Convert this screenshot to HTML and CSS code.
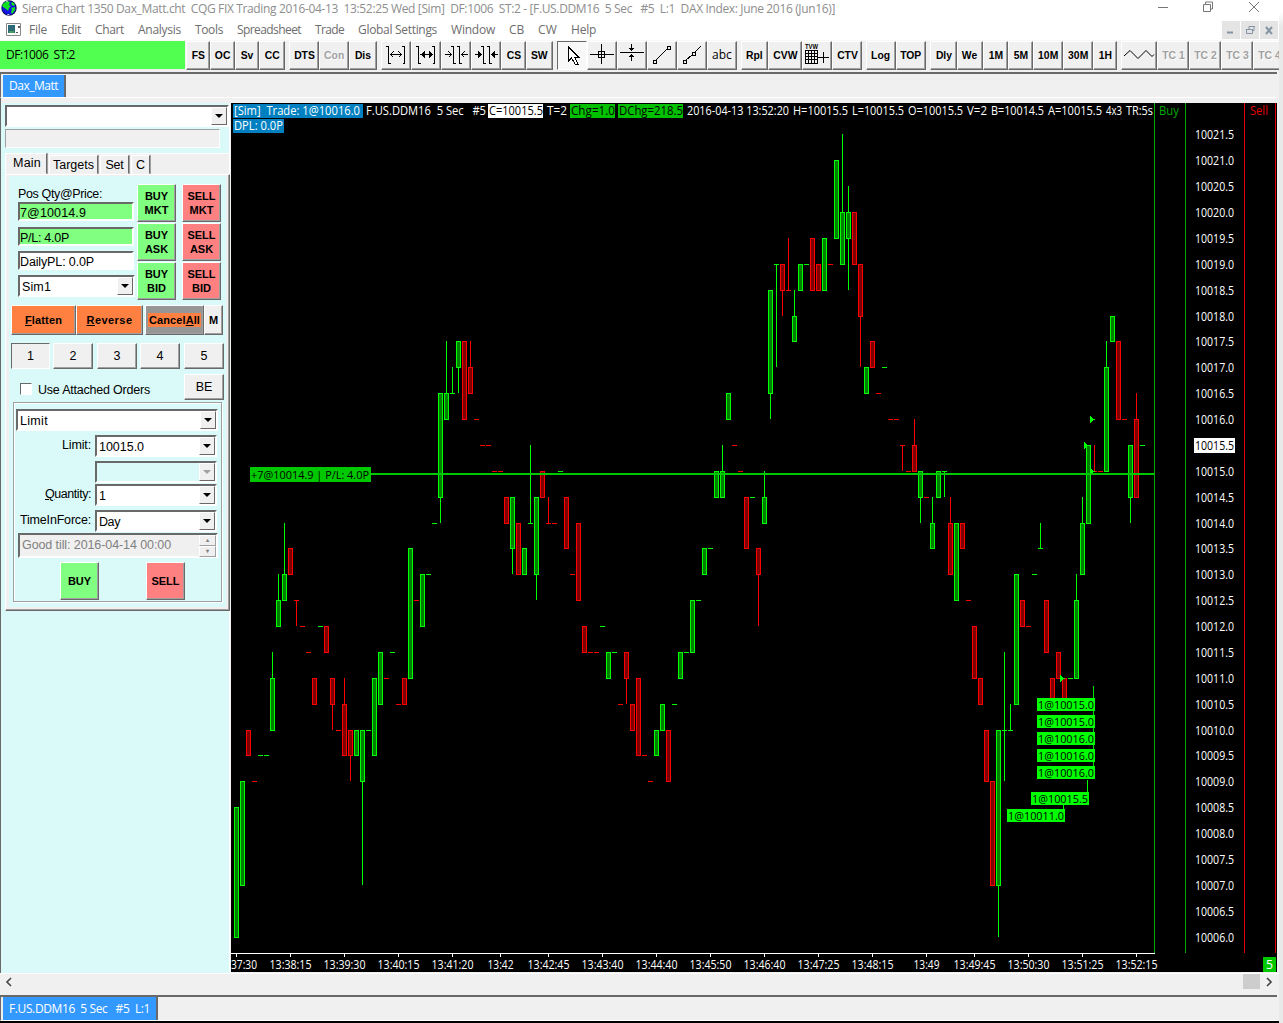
FILE: index.html
```html
<!DOCTYPE html>
<html lang="en">
<head>
<meta charset="utf-8">
<title>Sierra Chart</title>
<link rel="stylesheet" href="styles.css">
</head>
<body>
<div class="window">
  <header class="titlebar">
    <svg class="globe" width="16" height="16" viewBox="0 0 16 16"><circle cx="8" cy="8" r="7.7" fill="#0a0a50"/><circle cx="8" cy="8" r="6.8" fill="#1414e0"/><path d="M3 3l3-2 3 1-1 3 2 1-2 2-1 3-2-2-3-2-1-2zM11 2l2 1 1 2-2 1-2-2zM10 8l4-1v3l-3 4-1-2 1-2z" fill="#10e020"/><path d="M5 1l2 0-1 1zM6 14l3 0-2 1z" fill="#fff"/></svg>
    <div class="title"><span data-w="813">Sierra Chart 1350 Dax_Matt.cht&nbsp; CQG FIX Trading 2016-04-13&nbsp; 13:52:25 Wed [Sim]&nbsp; DF:1006&nbsp; ST:2 - [F.US.DDM16&nbsp; 5 Sec&nbsp;&nbsp; #5&nbsp; L:1&nbsp; DAX Index: June 2016 (Jun16)]</span></div>
    <svg class="syscontrols" width="110" height="20" viewBox="0 0 110 20" fill="none" stroke="#777"><path d="M5 7.500h10M50.500 4.500h7v7h-7zM52.500 4v-2h7v7h-2M96 2l10 10M106 2L96 12"/></svg>
  </header>
  <nav class="menubar">
    <svg class="docicon" width="16" height="14" viewBox="0 0 16 14"><path d="M.5.500h14v12H.5z" fill="#fff" stroke="#888"/><path d="M2 2h7v8H2z" fill="#2d6a78"/><path d="M3 8h5v2H3z" fill="#4a9a58"/><path d="M10 9h2v1h-2zM12 3h2v2h-2z" fill="#555"/></svg>
    <span data-w="18">File</span><span data-w="20">Edit</span><span data-w="29">Chart</span><span data-w="43">Analysis</span><span data-w="28">Tools</span><span data-w="64">Spreadsheet</span><span data-w="29">Trade</span><span data-w="79">Global Settings</span><span data-w="44">Window</span><span data-w="15">CB</span><span data-w="19">CW</span><span data-w="25">Help</span>
    <svg class="mdi" width="57" height="18" viewBox="0 0 57 18"><path d="M0 0h18v18H0zM19 0h18v18H19zM38 0h18v18H38z" fill="#e4e4e4"/><path d="M5 11.500h6" stroke="#8494a4" stroke-width="2"/><path d="M24.500 8.500h6v4h-6zM27 8V5.500h5v4h-1M24 8.500h7M27 5.500h6" fill="none" stroke="#8494a4"/><path d="M44 6l6 7M50 6l-6 7" stroke="#8494a4" stroke-width="2"/></svg>
  </nav>
  <div class="toolbar" id="toolbar"><div class="status"><span data-w="69">DF:1006&nbsp; ST:2</span></div></div>
  <div class="tabstrip"><div class="tab"><span data-w="49">Dax_Matt</span></div></div>
  <main class="work">
    <aside class="trade">
      <div class="combo symbol"><i></i><b class="drop"></b></div>
      <div class="readout"></div>
      <div class="pages"><span class="page on"><em data-w="28">Main</em></span><span class="page p2"><em data-w="41">Targets</em></span><span class="page p3"><em data-w="18">Set</em></span><span class="page p4"><em>C</em></span></div>
      <section class="sheet"><div class="inner">
        <div class="top">
          <div class="fields">
            <label><span data-w="84">Pos Qty@Price:</span></label>
            <div class="field green f1"><span data-w="66">7@10014.9</span></div>
            <div class="field green f2"><span data-w="49">P/L: 4.0P</span></div>
            <div class="field f3"><span data-w="74">DailyPL: 0.0P</span></div>
            <div class="combo acct"><i><span data-w="29">Sim1</span></i><b class="drop"></b></div>
          </div>
          <div class="stack"><button class="buy">BUY<br>MKT</button><button class="buy">BUY<br>ASK</button><button class="buy">BUY<br>BID</button></div>
          <div class="stack"><button class="sell">SELL<br>MKT</button><button class="sell">SELL<br>ASK</button><button class="sell">SELL<br>BID</button></div>
        </div>
        <div class="actions"><button class="orange a1"><span data-w="37"><u>F</u>latten</span></button><button class="orange a2"><span data-w="46"><u>R</u>everse</span></button><button class="cancel"><span class="hl"><span data-w="51">Cancel<u>A</u>ll</span></span></button><button class="m">M</button></div>
        <div class="nums"><button class="down">1</button><button>2</button><button>3</button><button>4</button><button>5</button></div>
        <div class="attach"><span class="check"></span><span class="cap"><span data-w="112">Use Attached Orders</span></span><button>BE</button></div>
        <div class="group">
          <div class="combo type"><i><span data-w="28">Limit</span></i><b class="drop"></b></div>
          <div class="row r1"><span data-w="29">Limit:</span><div class="combo"><i><span data-w="45">10015.0</span></i><b class="drop"></b></div></div>
          <div class="row r2"><div class="combo off"><i></i><b class="drop"></b></div></div>
          <div class="row r3"><span data-w="46"><u>Q</u>uantity:</span><div class="combo"><i>1</i><b class="drop"></b></div></div>
          <div class="row r4"><span data-w="71">TimeInForce:</span><div class="combo"><i><span data-w="21">Day</span></i><b class="drop"></b></div></div>
          <div class="till"><span data-w="149">Good till: 2016-04-14 00:00</span><div class="spin"><b>&#9652;</b><b>&#9662;</b></div></div>
          <div class="send"><button class="buy">BUY</button><button class="sell">SELL</button></div>
        </div>
      </div></section>
    </aside>
    <svg id="chart" width="1046" height="869" viewBox="231 103 1046 869" shape-rendering="crispEdges"></svg>
  </main>
  <div class="hscroll"><svg width="10" height="10" viewBox="0 0 10 10"><path d="M7 1L3 5l4 4" fill="none" stroke="#444" stroke-width="1.600"/></svg><span class="thumb"></span><svg width="10" height="10" viewBox="0 0 10 10"><path d="M3 1l4 4-4 4" fill="none" stroke="#444" stroke-width="1.600"/></svg></div>
  <footer class="tabstrip bottom"><div class="tab"><span data-w="141">F.US.DDM16&nbsp; 5 Sec&nbsp;&nbsp; #5&nbsp; L:1</span></div></footer>
</div>
<div class="edge"></div>
<script src="app.js"></script>
</body>
</html>
```
FILE: styles.css
```css
* { box-sizing: border-box; }
body { margin: 0; width: 1283px; height: 1023px; overflow: hidden; display: flex; background: #000; font: 12px "Open Sans", sans-serif; color: #000; }
.window { width: 1279px; height: 1021px; background: #f0f0f0; display: flex; flex-direction: column; flex: none; }
.edge { width: 4px; height: 1023px; background: linear-gradient(#fff 0, #fff 12px, #e8eaea 26px); }
[data-w] { white-space: nowrap; display: inline-block; }
em { font-style: normal; }

.titlebar { height: 20px; background: #fff; display: flex; flex: none; color: #8e8e8e; }
.globe { margin: 0 5px 0 1px; flex: none; }
.title { line-height: 17px; width: 814px; flex: none; }
.syscontrols { margin-left: 317px; flex: none; }
.menubar { height: 20px; background: #fff; display: flex; gap: 14px; flex: none; color: #6d6d6d; line-height: 19px; }
.docicon { margin: 3px -7px 0 6px; flex: none; }
.mdi { margin: 1px 0 0 auto; flex: none; }

.toolbar { height: 32px; display: flex; flex: none; overflow: hidden; border-top: 1px solid #f8f8f8; }
.status { width: 185px; height: 28px; background: #50ff50; padding-left: 6px; line-height: 27px; flex: none; margin-right: 1px; }
.tool { height: 29px; flex: none; border: 1px solid; border-color: #fff #696969 #696969 #fff; box-shadow: inset -1px -1px #a0a0a0; font: bold 11.5px/27px "Liberation Sans", sans-serif; text-align: center; white-space: nowrap; overflow: hidden; }
.tool b { display: inline-block; transform: scaleX(.9); margin: 0 -6px; }
.tool svg { display: block; margin: -2px 0 0 -1px; }
.tool.gap { margin-left: 4px; }
.tool.dim { color: #a0a0a0; text-shadow: 1px 1px #fff; }
.tool.press { background: #f8f8f8; border-color: #696969 #fff #fff #696969; box-shadow: none; }
.tool.word { font: 12px/26px "Open Sans", sans-serif; }

.tabstrip { height: 26px; border-top: 2px solid #696969; border-left: 1px solid #696969; border-bottom: 1px solid #fff; padding-left: 2px; display: flex; flex: none; width: 1277px; }
.tab { background: #3399ff; color: #fff; width: 63px; height: 22px; border-right: 2px solid #696969; text-align: center; line-height: 21px; margin-top: 1px; }
.work { height: 875px; display: flex; flex: none; padding-top: 5px; border-left: 1px solid #696969; }
.trade { width: 229px; height: 870px; background: #dafafa; border-right: 1px solid #fff; border-left: 1px solid #dafafa; padding: 2px 0 0 3px; font: 12.5px "Liberation Sans", sans-serif; flex: none; }
#chart { display: block; background: #000; flex: none; margin-left: 1px; }

.combo { display: flex; border: 2px solid; border-color: #696969 #fff #fff #696969; background: #fff; height: 22px; width: 117px; align-items: stretch; }
.combo i { flex: 1; font-style: normal; padding-left: 2px; line-height: 20px; }
.drop { width: 16px; background: #f0f0f0; border: 1px solid; border-color: #fff #696969 #696969 #fff; display: flex; align-items: center; justify-content: center; }
.drop::after { content: ""; border: 4px solid transparent; border-top-color: #000; border-bottom: 0; }
.combo.off, .combo.off i { background: #dafafa; }
.off .drop::after { border-top-color: #a0a0a0; }
.symbol { width: 224px; }
.readout { width: 215px; height: 19px; margin-top: 2px; border: 1px solid; border-color: #a0a0a0 #fff #fff #a0a0a0; background: #f0f0f0; }
.pages { display: flex; height: 21px; margin-top: 5px; background: #f0f0f0; align-items: flex-end; gap: 2px; width: 224px; border-top: 1px solid #fff; }
.page { height: 19px; border: 1px solid; border-color: #fff #696969 transparent #fff; box-shadow: 1px 0 #a0a0a0; text-align: center; line-height: 19px; }
.page.on { width: 42px; height: 21px; line-height: 18px; padding-left: 2px; }
.p2 { width: 49px; } .p3 { width: 29px; } .p4 { width: 19px; }
.sheet { width: 225px; height: 437px; background: #f0f0f0; border: 1px solid #fff; border-color: #fff #696969 #696969 #fff; box-shadow: inset -1px -1px #a0a0a0; padding: 1px 3px 3px 3px; }
.inner { background: #dafafa; height: 431px; width: 217px; }
.top { display: flex; height: 124px; padding: 8px 0 0 9px; }
.fields { width: 116px; margin-right: 3px; }
.fields label { display: block; height: 18px; line-height: 20px; }
.field { height: 19px; border: 2px solid; border-color: #696969 #fff #fff #696969; background: #fff; line-height: 18px; }
.field.green { background: #80ff80; }
.f2 { margin-top: 6px; } .f3 { margin-top: 5px; } .acct { margin-top: 5px; }
.acct i { line-height: 21px; }
.stack { display: flex; flex-direction: column; gap: 1px; width: 39px; margin-right: 6px; }
button { padding: 0; border: 1px solid; border-color: #fff #696969 #696969 #fff; box-shadow: inset -1px -1px #a0a0a0; background: #f0f0f0; color: #000; font: 12.5px "Liberation Sans", sans-serif; border-radius: 0; }
button.buy, button.sell { font: bold 11px/14px "Liberation Sans", sans-serif; width: 39px; height: 38px; }
button.buy { background: #80ff80; } button.sell { background: #ff8080; }
.actions { display: flex; margin: 5px 0 0 2px; height: 30px; }
.actions button { font-weight: bold; font-size: 11px; }
button.orange { background: #ff8040; width: 67px; }
button.orange.a1 { width: 65px; }
button.cancel { background: #969696; width: 59px; margin-left: 2px; display: flex; align-items: center; justify-content: center; }
.hl { background: #ff8040; padding: 1px; width: 53px; }
button.m { width: 19px; }
.nums { display: flex; gap: 3px; margin: 8px 1px 0 2px; height: 26px; width: 213px; }
.nums button { width: 40px; }
.nums button:nth-child(odd):not(:first-child) { margin-left: 1px; }
.nums button.down { width: 39px; border-color: #696969 #fff #fff #696969; box-shadow: none; }
.attach { display: flex; height: 26px; margin: 5px 0 0 11px; }
.check { width: 12px; height: 12px; border: 1px solid; border-color: #696969 #fff #fff #696969; background: #fff; margin-top: 9px; }
.cap { margin: 8px 0 0 6px; width: 146px; line-height: 16px; }
.attach button { width: 40px; }
.group { margin: 2px 0 0 4px; width: 209px; height: 200px; border: 1px solid #a0a0a0; box-shadow: inset 1px 1px #fff, 1px 1px #fff; padding: 6px 0 0 2px; }
.type { width: 202px; }
.row { display: flex; justify-content: flex-end; width: 202px; height: 22px; gap: 4px; }
.row > span { line-height: 21px; }
.row .combo { width: 122px; margin-right: 1px; }
.r1 { margin-top: 4px; } .r2 { margin-top: 4px; } .r3 { margin-top: 1px; } .r4 { margin-top: 4px; }
.till { width: 200px; height: 25px; margin: 1px 0 0 2px; border: 2px solid; border-color: #696969 #fff #fff #696969; background: #f0f0f0; color: #808080; display: flex; justify-content: space-between; line-height: 21px; padding-left: 2px; }
.spin { width: 17px; display: flex; flex-direction: column; }
.spin b { height: 11px; border: 1px solid; border-color: #fff #a0a0a0 #a0a0a0 #fff; font-size: 6px; line-height: 9px; text-align: center; }
.send { display: flex; gap: 47px; margin: 4px 0 0 44px; }

.hscroll { height: 22px; border-top: 1px solid #fff; display: flex; align-items: flex-start; flex: none; padding: 0 5px 0 4px; }
.hscroll svg { margin-top: 3px; }
.thumb { width: 17px; height: 15px; background: #cdcdcd; margin: 0 4px 0 auto; }
.bottom .tab { width: 155px; margin-top: 0; height: 23px; line-height: 23px; }
```
FILE: app.js
```js
// Toolbar: [label or icon name, width, classes]
const icons = {
  range: '<path d="M5 6.500h2.500v17M7.500 23.500h2M9 14.500h12M12.500 11.500l-3 3 3 3M17.500 11.500l3 3-3 3M21 6.500h2.500v17h-2"/>',
  rangeb: '<path d="M5 6.500h2.500v17M7.500 23.500h2M9 14.500h12M21 6.500h2.500v17h-2"/><path d="M13.500 10.500v8l-4-4zM17.500 10.500v8l4-4z" fill="#000" stroke="none"/>',
  squeeze: '<path d="M4 14.500h6M7.500 11.500l3 3-3 3M27 14.500h-6M23.500 11.500l-3 3 3 3M10 6.500h2.500v17h2M16 6.500h2.500v17h2"/>',
  squeezeb: '<path d="M4 14.500h6M27 14.500h-6M10 6.500h2.500v17h2M16 6.500h2.500v17h2"/><path d="M7 10.500v8l4-4zM24 10.500v8l-4-4z" fill="#000" stroke="none"/>',
  pointer: '<path d="M11.500 7v14l3-3 3.500 6h3l-3.500-7h4z" fill="#fff"/>',
  cross: '<path d="M3 14.500h24M14.500 4v20M11.500 11.500h6v6h-6z"/>',
  hline: '<path d="M3 12.500h24M14.500 4v6M12.500 8l2 2 2-2M14.500 21v-6M12.500 17l2-2 2 2"/>',
  line: '<path d="M9 20L20 9M6.500 20.500h3v3h-3zM20.500 6.500h3v3h-3z"/>',
  ray: '<path d="M9 20L15 15M18 12L24 6M6.500 20.500h3v3h-3zM15.500 12.500h3v3h-3z"/>',
  table: '<path d="M3.500 10.500h12v13h-12zM3 13.500h13M3 16.500h13M3 19.500h13M6.500 10v14M9.500 10v14M12.500 10v14" stroke-width="1.300"/><path d="M16 17.500h11M21.500 12v11"/>',
  zig: '<path d="M3 16L9 10.500 17 18.500 25 10.500 31 16.500 33 14.500" shape-rendering="auto"/>'
};
const tools = [["FS",24],["OC",25],["Sv",24],["CC",26],["DTS",30,"gap"],["Con",30,"dim"],["Dis",28],
  ["@range",30,"gap"],["@rangeb",30],["@squeeze",30],["@squeezeb",30],["CS",25],["SW",27],
  ["@pointer",30,"gap press"],["@cross",30],["@hline",30],["@line",30],["@ray",30],["abc",30,"word"],
  ["Rpl",27,"gap"],["CVW",34],["@table",30],["CTV",30],["Log",30,"gap"],["TOP",30],["Dly",27,"gap"],["We",26],["1M",25],["5M",25],["10M",30],["30M",30],["1H",24],
  ["@zig",36,"gap"],["TC 1",32,"dim"],["TC 2",32,"dim"],["TC 3",32,"dim"],["TC 4",32,"dim"]];
document.getElementById("toolbar").insertAdjacentHTML("beforeend", tools.map(([t, w, c = ""]) => {
  const name = t.slice(1);
  const body = t[0] === "@"
    ? `<svg width="${w}" height="28" viewBox="0 0 ${w} 28" fill="none" stroke="#000" shape-rendering="crispEdges">${icons[name]}${name === "table" ? '<text x="3" y="9" font-size="6.500" font-weight="bold" textLength="13" lengthAdjust="spacingAndGlyphs" fill="#000" stroke="none">TVW</text>' : ""}</svg>`
    : c === "word" ? t : `<b>${t}</b>`;
  return `<div class="tool ${c}" style="width:${w}px">${body}</div>`;
}).join(""));

// Tracks each caption to its nominal width
document.querySelectorAll("[data-w]").forEach(e => {
  const n = e.textContent.length, w = e.getBoundingClientRect().width;
  e.style.letterSpacing = ((e.dataset.w - w) / n) + "px";
});

// Bars: column, high, body top, body bottom, low (half-point steps below 10021.5), direction
const bars = `0 26 26 31 31 G,1 25 25 29 29 G,2 23 23 24 24 R,3 25 25 25 25 R,4 24 24 24 24 G,5 24 24 24 24 G,6 20 21 23 23 G,7 17 18 19 19 G,8 15 17 18 18 G,9 16 16 17 17 R,10 18 18 18 19 R,11 19 19 19 19 R,12 20 20 20 20 R,13 21 21 22 22 R,14 19 19 19 19 G,15 19 19 20 20 R,16 21 21 22 23 R,17 23 23 23 23 R,18 21 22 24 24 R,19 23 23 24 25 R,20 23 23 24 24 G,21 23 23 25 29 G,22 23 23 23 23 G,23 21 21 24 24 G,24 20 20 22 22 G,25 21 21 21 21 R,26 20 20 20 20 G,27 22 22 22 22 R,28 21 21 22 22 R,29 16 16 21 21 G,30 18 18 18 18 R,31 17 17 19 19 G,32 17 17 17 17 G,33 15 15 15 15 G,34 10 10 14 15 G,35 8 10 11 11 G,36 9 10 10 10 G,37 8 8 9 10 G,38 8 8 11 11 R,39 8 9 10 10 R,40 11 11 11 11 R,41 12 12 12 12 R,42 12 12 12 12 R,43 13 13 13 13 R,44 13 13 13 13 R,45 14 14 15 15 R,46 14 14 16 17 G,47 15 15 17 17 R,48 16 16 17 17 G,49 12 15 15 15 G,50 14 14 17 18 G,51 13 13 14 14 R,52 14 15 15 15 R,53 15 15 15 15 R,54 13 13 13 13 G,55 14 14 16 16 R,56 17 17 17 17 R,57 15 15 18 18 R,58 19 19 20 20 R,59 20 20 20 20 R,60 20 20 20 20 R,61 19 19 19 19 G,62 20 20 21 21 G,63 20 20 20 20 G,64 22 22 22 22 R,65 20 20 21 22 R,66 22 22 23 23 R,67 21 21 24 24 R,68 24 24 24 24 R,69 25 25 25 25 R,70 23 23 24 24 G,71 22 22 23 23 G,72 23 23 25 25 R,73 22 22 22 22 G,74 20 20 21 21 G,75 20 20 20 20 G,76 18 18 20 20 G,77 18 18 18 18 G,78 16 16 17 17 G,79 16 16 16 16 G,80 13 13 14 14 G,81 12 13 14 14 G,82 10 10 11 11 G,83 12 12 12 12 R,84 13 13 13 13 R,85 14 14 16 16 R,86 14 14 14 14 G,87 16 16 17 19 R,88 13 14 15 15 G,89 6 6 10 11 G,90 5 5 5 9 G,91 5 5 6 7 R,92 4 6 6 6 R,93 6 7 8 8 G,94 5 5 6 6 G,95 5 5 5 5 G,96 4 4 6 6 R,97 5 5 6 6 R,98 4 4 6 6 G,99 5 5 5 5 R,100 1 1 4 4 G,101 0 3 5 5 G,102 2 3 4 6 G,103 3 3 5 5 R,104 5 5 7 9 R,105 9 9 10 10 G,106 8 8 9 9 R,107 10 10 10 10 R,108 9 9 9 9 G,109 11 11 11 11 R,110 11 11 11 11 R,111 12 12 12 13 R,112 13 13 13 13 R,113 11 12 13 13 R,114 13 13 14 15 G,115 14 14 14 14 R,116 14 15 16 16 G,117 13 13 14 14 G,118 13 13 13 14 G,119 14 15 17 17 R,120 15 15 18 18 G,121 15 15 16 16 R,122 18 18 18 18 R,123 19 19 21 21 R,124 21 21 22 22 R,125 23 23 25 25 R,126 25 25 29 29 R,127 23 23 29 31 G,128 20 23 23 25 G,129 22 23 23 23 G,130 17 17 22 22 G,131 18 18 19 19 R,132 19 19 19 19 R,133 17 17 17 17 G,134 15 16 16 16 G,135 18 18 20 20 R,136 21 21 22 22 R,137 20 20 21 21 R,138 21 21 22 22 R,139 21 21 21 21 G,140 17 18 21 21 G,141 14 15 17 17 G,142 12 12 15 15 G,143 12 13 13 13 R,144 13 13 13 13 R,145 8 9 13 13 G,146 7 7 8 8 G,147 8 8 11 11 R,148 11 11 11 11 R,149 12 12 14 15 G,150 10 11 14 14 R,151 12 12 12 12 G`;
const Y = k => 134 + 26 * k - Math.floor(k / 8);
let s = "";
const rect = (x, y, w, h, f) => { s += `<rect x="${x}" y="${y}" width="${w}" height="${h}" fill="${f}"/>`; };
const text = (t, x, y, w, f, size = 12) => { s += `<text xml:space="preserve" x="${x}" y="${y}" textLength="${w}" lengthAdjust="spacingAndGlyphs" font-size="${size}" fill="${f}">${t}</text>`; };
for (const b of bars.split(",")) {
  const p = b.split(" "), [i, hi, top, bot, lo] = p.map(Number);
  const [edge, fill] = p[5] === "G" ? ["#00ff00", "#008000"] : ["#ff0000", "#800000"];
  const x = 236 + 6 * i;
  if (lo > hi) rect(x, Y(hi), 1, Y(lo) - Y(hi), edge);
  rect(x - 2, Y(top), 5, Y(bot) - Y(top) + 1, edge);
  if (bot > top) rect(x - 1, Y(top) + 1, 3, Y(bot) - Y(top) - 1, fill);
}
for (const [x, y] of [[1090, 419], [1084, 445], [1090, 471], [1060, 678]]) s += `<path d="M${x} ${y - 3.500}l4.500 4-4.500 4z" fill="#00ff00"/>`;
rect(371, 473, 784, 2, "#00c800");
rect(250, 467, 121, 15, "#00c800");
text("+7@10014.9 | P/L: 4.0P", 251, 479, 118, "#000", 11.5);
rect(1093, 686, 1, 80, "#00e000"); rect(1087, 780, 1, 12, "#00ff00"); rect(1063, 805, 1, 4, "#00ff00");
[[1037, 698, "1@10015.0"], [1037, 715, "1@10015.0"], [1037, 732, "1@10016.0"], [1037, 749, "1@10016.0"], [1037, 766, "1@10016.0"], [1031, 792, "1@10015.5"], [1007, 809, "1@10011.0"]]
  .forEach(([x, y, t]) => { rect(x, y, 58, 13, "#00ff00"); text(t, x + 1, y + 11, 56, "#000", 11); });
rect(1154, 103, 1, 850, "#00a800"); rect(1185, 103, 1, 850, "#00a800");
rect(1244, 103, 1, 850, "#e00000"); rect(1275, 103, 1, 850, "#e00000");
rect(231, 953, 924, 1, "#fff");
for (let k = 0; k < 32; k++) {
  if (k === 12) rect(1194, 438, 41, 15, "#fff");
  text((10021.5 - k / 2).toFixed(1), 1195, Y(k) + 5, 39, k === 12 ? "#000" : "#fff");
}
rect(236, 954, 1, 3, "#fff");
text("37:30", 231, 969, 26, "#fff");
[[290, "13:38:15"], [344, "13:39:30"], [398, "13:40:15"], [452, "13:41:20"], [500, "13:42"], [548, "13:42:45"], [602, "13:43:40"], [656, "13:44:40"], [710, "13:45:50"], [764, "13:46:40"], [818, "13:47:25"], [872, "13:48:15"], [926, "13:49"], [974, "13:49:45"], [1028, "13:50:30"], [1082, "13:51:25"], [1136, "13:52:15"]]
  .forEach(([x, t]) => { const w = t.length > 5 ? 42 : 26; rect(x, 954, 1, 3, "#fff"); text(t, x - w / 2 + .5, 969, w, "#fff"); });
// Heading values
[[233, 130, "#0080c0"], [488, 55, "#fff"], [570, 45, "#00c000"], [618, 65, "#00c000"]].forEach(([x, w, f]) => rect(x, 104, w, 14, f));
rect(233, 119, 51, 14, "#0080c0");
text("DPL: 0.0P", 234, 130, 49, "#fff");
const nb = "\u00a0";
[["[Sim]" + nb + " Trade: 1@10016.0", 234, 126, "#fff"], ["F.US.DDM16" + nb + " 5 Sec" + nb + nb + " #5", 366, 120, "#fff"], ["C=10015.5", 489, 54, "#000"], ["T=2", 547, 20, "#fff"], ["Chg=1.0", 571, 44, "#000"], ["DChg=218.5", 619, 64, "#000"], ["2016-04-13 13:52:20", 687, 102, "#fff"], ["H=10015.5", 793, 55, "#fff"], ["L=10015.5", 852, 52, "#fff"], ["O=10015.5", 908, 55, "#fff"], ["V=2", 967, 20, "#fff"], ["B=10014.5", 991, 53, "#fff"], ["A=10015.5", 1048, 54, "#fff"], ["4x3", 1106, 16, "#fff"], ["TR:5s", 1126, 27, "#fff"], ["Buy", 1159, 20, "#00a800"], ["Sell", 1250, 18, "#e00000"]]
  .forEach(([t, x, w, f]) => text(t, x, 115, w, f));
rect(1263, 957, 13, 15, "#00c800");
text("5", 1266, 969, 7, "#fff");
document.getElementById("chart").innerHTML = s;
```
